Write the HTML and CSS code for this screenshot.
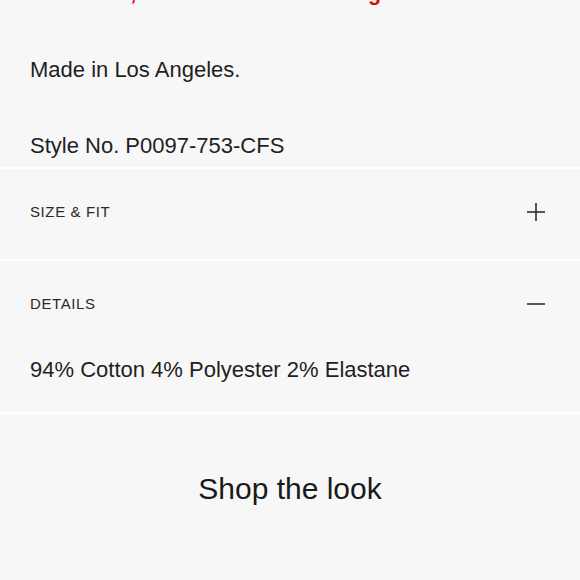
FILE: index.html
```html
<!DOCTYPE html>
<html>
<head>
  <meta charset="UTF-8">
  <link rel="stylesheet" href="styles.css">
</head>
<body>
  <div class="product-info">
    <div class="info-block">
      <p class="sale-note">Final Sale, No Returns or Exchanges</p>
      <p class="info-line made-in">Made in Los Angeles.</p>
      <p class="info-line style-no">Style No. P0097-753-CFS</p>
    </div>

    <div class="accordion-item">
      <div class="accordion-header">
        <span class="accordion-title">SIZE &amp; FIT</span>
        <svg class="accordion-icon" width="18" height="18" viewBox="0 0 18 18">
          <path d="M0 9H18M9 0V18" stroke="#222" stroke-width="1.5" fill="none"/>
        </svg>
      </div>
    </div>

    <div class="accordion-item open">
      <div class="accordion-header">
        <span class="accordion-title">DETAILS</span>
        <svg class="accordion-icon" width="18" height="18" viewBox="0 0 18 18">
          <path d="M0 9H18" stroke="#222" stroke-width="1.5" fill="none"/>
        </svg>
      </div>
      <div class="accordion-body">
        <p class="info-line">94% Cotton 4% Polyester 2% Elastane</p>
      </div>
    </div>

    <div class="shop-look">
      <h2 class="shop-look-title">Shop the look</h2>
    </div>
  </div>
</body>
</html>
```

FILE: styles.css
```css
body {
  font-family: "Liberation Sans", Arial, sans-serif;
  margin: 0;
  padding: 0;
  background-color: white;
  color: #1f1f1f;
  overflow: hidden;
}
p, h2 {
  margin: 0;
}
.product-info {
  display: flex;
  flex-direction: column;
  gap: 2px;
}
.info-block {
  background-color: #f7f7f7;
  padding: 0 30px 8px;
  overflow: hidden;
}
/* only the tail of this line shows at the top of the view */
.sale-note {
  margin-top: -20px;
  color: #e10a0a;
  font-weight: bold;
  font-size: 21.5px;
  line-height: 26px;
  white-space: nowrap;
}
.info-line {
  font-size: 22px;
  line-height: 26px;
}
.made-in {
  margin-top: 51px;
}
.style-no {
  margin-top: 50px;
}
/* Accordion rows */
.accordion-item {
  background-color: #f7f7f7;
}
.accordion-header {
  display: flex;
  justify-content: space-between;
  align-items: center;
  padding: 34px 35px 38px 30px;
}
.accordion-title {
  font-size: 15px;
  line-height: 18px;
  letter-spacing: 0.6px;
  color: #2a2a2a;
}
.accordion-icon {
  display: block;
}
.accordion-body {
  padding: 6px 30px 29px;
}
.shop-look {
  background-color: #f7f7f7;
  height: 166px;
  padding-top: 57px;
  box-sizing: border-box;
}
.shop-look-title {
  text-align: center;
  font-weight: normal;
  font-size: 30px;
  line-height: 36px;
  color: #1a1a1a;
}
```
